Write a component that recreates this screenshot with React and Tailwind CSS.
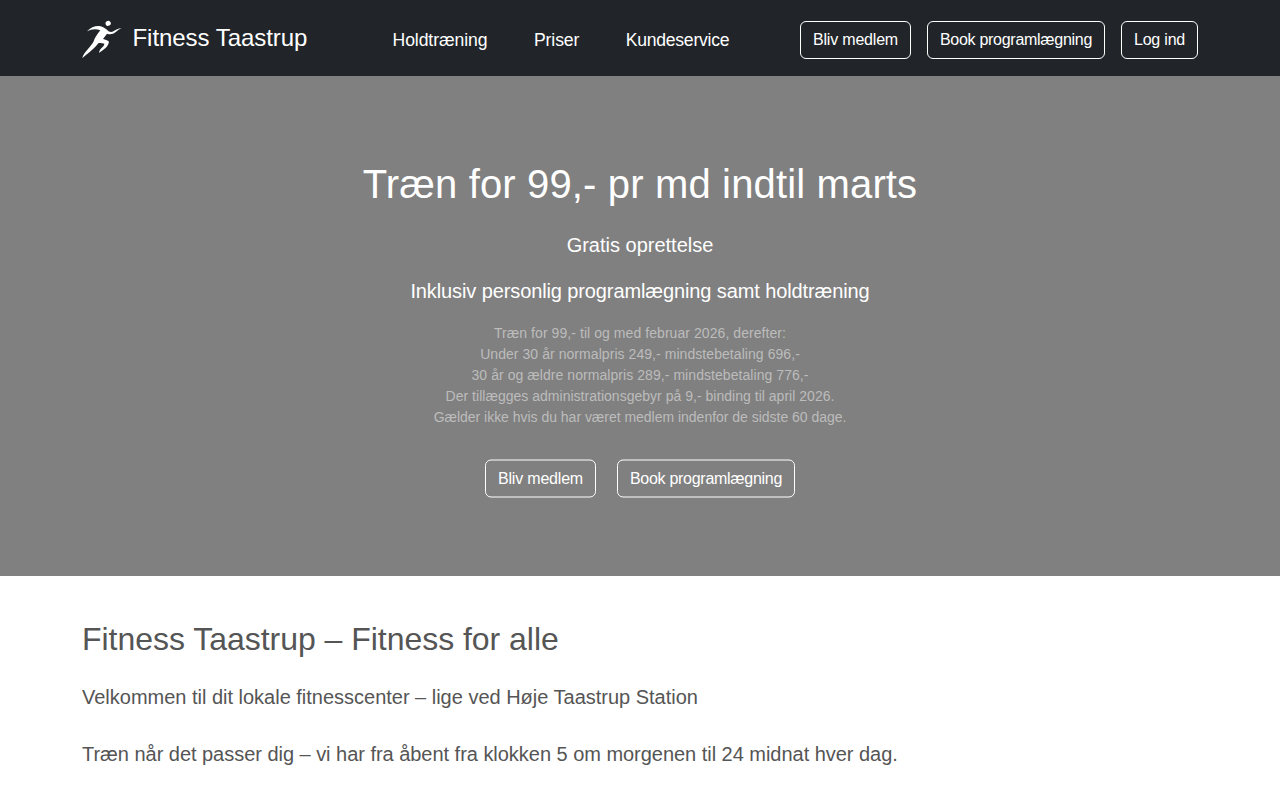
const navLinks = [
    { label: 'Holdtræning', className: 'tracking-[-0.08px]' },
    { label: 'Priser', className: 'ml-[46.5px] tracking-[-0.1px]' },
    { label: 'Kundeservice', className: 'ml-[46.5px] tracking-[-0.27px]' },
];

function Runner() {
    return (
        <svg className="w-10 h-10 mt-[3px]" viewBox="18 18 120 120" fill="#fff">
            <ellipse cx="96.5" cy="28" rx="8" ry="7.5" transform="rotate(-25 96.5 28)" />
            {/* Torso, arms and legs */}
            <path d="M33 52 C44 40 57 35 70 36 C79 37 85 41 91 46 C97 53 105 56 112 52 C119 47 127 44 137 42 C129 46 124 50 118 55 C110 62 101 62 93 59 L81 75 C88 77 95 78 99 83 C97 96 87 104 78 110 C73 113 72 115 70 117 C68 112 74 105 79 100 C83 96 85 92 85 89 C78 87 72 86 67 88 C59 99 50 107 41 114 C32 121 25 126 19 133 C20 124 27 115 36 105 C44 96 50 89 53 82 C57 70 64 60 73 49 C60 43 46 45 33 52 Z" />
        </svg>
    );
}

function OutlineButton({ className, children }) {
    return (
        <button className={`h-[38px] rounded-md border border-white text-base leading-6 text-white text-center whitespace-nowrap ${className}`}>
            {children}
        </button>
    );
}

export default function App() {
    return (
        <div className="h-[800px] overflow-hidden bg-white font-['Liberation_Sans',Arial,sans-serif]">
            {/* Navbar */}
            <header className="h-[76px] bg-[#212529] text-white">
                <div className="w-[1116px] h-full mx-auto flex items-center pt-1">
                    <a className="flex items-center w-[310.5px] mb-1">
                        <Runner />
                        <span className="ml-[10.5px] text-2xl leading-9 tracking-[-0.05px]">Fitness Taastrup</span>
                    </a>
                    <nav className="flex text-[17.6px] leading-6">
                        {navLinks.map((link) => (
                            <a key={link.label} className={link.className}>{link.label}</a>
                        ))}
                    </nav>
                    <div className="ml-auto flex gap-4">
                        <OutlineButton className="w-[111px] pb-px tracking-[-0.19px]">Bliv medlem</OutlineButton>
                        <OutlineButton className="w-[178px] pb-px tracking-[-0.28px]">Book programlægning</OutlineButton>
                        <OutlineButton className="w-[77px] pb-px tracking-[-0.2px]">Log ind</OutlineButton>
                    </div>
                </div>
            </header>

            {/* Hero */}
            <section className="h-[500px] pt-[84px] bg-[#808080] text-white text-center">
                <h1 className="text-[40px] leading-[48px] tracking-[0.15px]">Træn for 99,- pr md indtil marts</h1>
                <p className="mt-[22px] text-xl leading-[30px]">Gratis oprettelse</p>
                <p className="mt-4 text-xl leading-[30px] tracking-[-0.11px]">Inklusiv personlig programlægning samt holdtræning</p>
                <div className="mt-[17px] text-sm leading-[21px] text-[#bcbcbc]">
                    <p className="tracking-[0.065px]">Træn for 99,- til og med februar 2026, derefter:</p>
                    <p className="tracking-[0.06px]">Under 30 år normalpris 249,- mindstebetaling 696,-</p>
                    <p className="tracking-[0.06px]">30 år og ældre normalpris 289,- mindstebetaling 776,-</p>
                    <p className="tracking-[0.02px]">Der tillægges administrationsgebyr på 9,- binding til april 2026.</p>
                    <p className="tracking-[-0.02px]">Gælder ikke hvis du har været medlem indenfor de sidste 60 dage.</p>
                </div>
                <div className="mt-8 flex justify-center gap-[21px] -translate-y-[0.5px]">
                    <OutlineButton className="w-[111px] tracking-[-0.19px]">Bliv medlem</OutlineButton>
                    <OutlineButton className="w-[178px] tracking-[-0.28px]">Book programlægning</OutlineButton>
                </div>
            </section>

            {/* Intro */}
            <main className="w-[1116px] mx-auto pt-11 text-[#555]">
                <h2 className="text-[32px] leading-[38px] tracking-[-0.03px]">Fitness Taastrup – Fitness for alle</h2>
                <p className="mt-6 text-xl leading-[30px] tracking-[-0.01px]">Velkommen til dit lokale fitnesscenter – lige ved Høje Taastrup Station</p>
                <p className="mt-[27px] text-xl leading-[30px] tracking-[-0.03px]">
                    Træn når det passer dig – vi har fra åbent fra klokken 5 om morgenen til 24 midnat hver dag.
                </p>
            </main>
        </div>
    );
}
